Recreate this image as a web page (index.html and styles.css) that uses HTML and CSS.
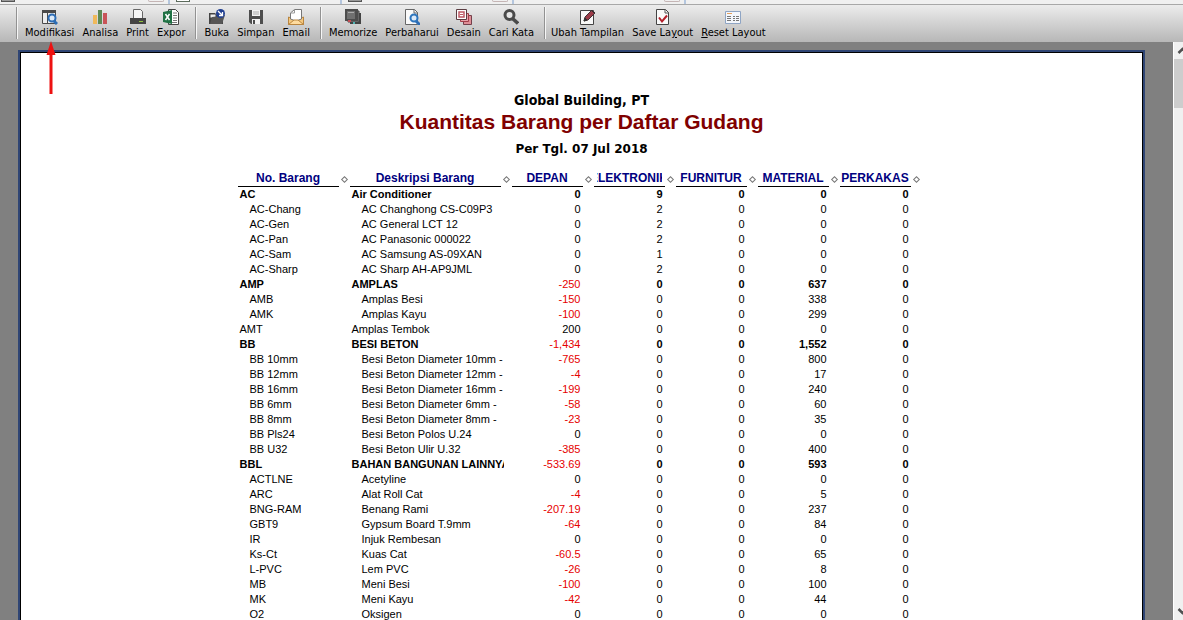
FILE: index.html
```html
<!DOCTYPE html>
<html lang="id">
<head>
<meta charset="utf-8">
<title>Kuantitas Barang per Daftar Gudang</title>
<link rel="stylesheet" href="styles.css">
</head>
<body>
<div class="app">
<div class="tabs">
<span class="tab tab-first"><i class="doc"></i><i class="close"></i></span>
<span class="tab"><i class="doc doc-green"></i></span>
<span class="tab"><i class="doc"></i><i class="close"></i></span>
<span class="tab tab-wide"><i class="close"></i></span>
<span class="tab tab-rest"></span>
</div>
<nav class="toolbar">
<div class="group">
<button class="tool"><svg viewBox="0 0 16 16"><path d="M.5 1.500h13v13H.5z" fill="#eee" stroke="#4a4a4a"/><path d="M0 1h14v3H0zM5 4h1v11H5z" fill="#4a4a4a"/><path d="M11 11l4 4" stroke="#2d6db5" stroke-width="3"/><circle cx="10" cy="9" r="3.500" fill="#dceaf8" stroke="#2d6db5" stroke-width="2"/></svg>Modifikasi</button>
<button class="tool"><svg viewBox="0 0 16 16"><path d="M1 6h4v9H1z" fill="#f0b95a"/><path d="M6 1h4v14H6z" fill="#5d8a55"/><path d="M11 4h4v11h-4z" fill="#c85458"/></svg>Analisa</button>
<button class="tool"><svg viewBox="0 0 16 16"><path d="M3.500 10V.5h7l2 2V10" fill="#f5f5f5" stroke="#666"/><path d="M0 9h16v6H0z" fill="#444"/><path d="M9 12h4v1H9z" fill="#8fc43e"/></svg>Print</button>
<button class="tool"><svg viewBox="0 0 16 16"><path d="M5.500.5h7l3 3v12h-10z" fill="#fff" stroke="#444"/><path d="M10 4h4M10 6.500h4M10 9h4M10 11.500h4M7 13.500h7" stroke="#777"/><path d="M0 3l9-2v14l-9-2z" fill="#207245"/><path d="M2.500 5l4 6M6.500 5l-4 6" stroke="#fff" stroke-width="1.500"/></svg>Expor</button>
</div>
<div class="group">
<button class="tool"><svg viewBox="0 0 16 16"><path d="M0 4h6l2 2h6v9H0z" fill="#444"/><path d="M1.500 5.500h5v3h-5z" fill="#eee"/><path d="M3 8l9-1 4-1-3 9H1z" fill="#565656"/><circle cx="11.500" cy="4.500" r="4.500" fill="#203f90"/><path d="M9 2l4 4M13.500 3v3.500H10" stroke="#fff" fill="none" stroke-width="1.300"/></svg>Buka</button>
<button class="tool"><svg viewBox="0 0 16 16"><path d="M1 1h14v14H3l-2-2z" fill="#4d4d4d"/><path d="M4 1h8v6H4zM4 10h8v5H4z" fill="#f2f2f2"/><path d="M5 11h2v4H5z" fill="#4d4d4d"/><path d="M5 3h6M5 5h6" stroke="#aaa"/></svg>Simpan</button>
<button class="tool"><svg viewBox="0 0 16 16"><path d="M.5 8v7.500h15V8L8 11z" fill="#f4c77d" stroke="#b9853f"/><path d="M2.500 10V4l4-3.500h7V10L8 12z" fill="#fff" stroke="#777"/><path d="M2.500 4h4V.5" fill="none" stroke="#999"/><path d="M.5 15.500L6 11h4l5.500 4.500z" fill="#ffdc9f" stroke="#b9853f"/></svg>Email</button>
</div>
<div class="group">
<button class="tool"><svg viewBox="0 0 16 16"><path d="M5 4h11v11H5z" fill="#444"/><path d="M3 2h11v11H3z" fill="#888" stroke="#444"/><path d="M0 0h13v12H0z" fill="#4d4d4d"/><path d="M2 2h8v8H2z" fill="#707070"/><path d="M3 3h6v1H3z" fill="#aaa"/><path d="M3 11h3v2H3z" fill="#c44d55"/><path d="M8 13h2v2H8z" fill="#53b5b5"/></svg>Memorize</button>
<button class="tool"><svg viewBox="0 0 16 16"><path d="M1.500.5h9l3 3v12h-12z" fill="#fafafa" stroke="#666"/><path d="M10 .5V4h4" fill="none" stroke="#666"/><path d="M11 11l5 5" stroke="#2d6db5" stroke-width="3"/><circle cx="10" cy="9" r="3.500" fill="#dceaf8" stroke="#2d75bd" stroke-width="2"/></svg>Perbaharui</button>
<button class="tool"><svg viewBox="0 0 16 16"><path d="M7.500 6.500h8v9h-8z" fill="#df8e96" stroke="#74404b"/><path d="M4.500 4.500h8v8h-8z" fill="#e5a3aa" stroke="#a23e4a"/><path d="M.5.5h10v10H.5z" fill="#fff" stroke="#5b3d42"/><path d="M3 3h5v5H3z" fill="#fff" stroke="#bf5965" stroke-width="1.500"/><path d="M4 5.500h3" stroke="#bf5965"/></svg>Desain</button>
<button class="tool"><svg viewBox="0 0 16 16"><path d="M9.500 9.500l5.500 5" stroke="#4a4a4a" stroke-width="3.500"/><circle cx="6.500" cy="6" r="4.500" fill="#e6e6e6" stroke="#4a4a4a" stroke-width="3"/></svg>Cari Kata</button>
</div>
<div class="group group-last">
<button class="tool"><svg viewBox="0 0 16 16"><path d="M.5 1.500h13v14H.5z" fill="#f8f8f8" stroke="#444"/><path d="M4 12l1-4 7-7 3 3-7 7z" fill="#9c3b48" stroke="#3f3034"/><path d="M11 1l3.500 3.500M4 12l3-1-2-2z" stroke="#333" fill="#333"/></svg>Ubah Tampilan</button>
<button class="tool"><svg viewBox="0 0 16 16"><path d="M1.500.5h9l3 3v12h-12z" fill="#fafafa" stroke="#444"/><path d="M10 .5V4h4" fill="none" stroke="#555"/><path d="M4 8.500l3 4 5-6" fill="none" stroke="#b3202b" stroke-width="2"/></svg><span>Save La<u>y</u>out</span></button>
<button class="tool"><svg viewBox="0 0 16 16"><path d="M.5 2.500h15v12H.5z" fill="#f4f7fc" stroke="#8fa5c4"/><path d="M2 4.500h5" stroke="#e6a25e"/><path d="M2 7.500h4M2 9.500h4M2 11.500h4M8 7.500h2M11 7.500h3M8 9.500h2M11 9.500h3M8 11.500h2M11 11.500h3" stroke="#777"/></svg><span><u>R</u>eset Layout</span></button>
</div>
</nav>
<main class="workspace">
<div class="viewer">
<article class="page">
<header class="heading">
<p class="company">Global Building, PT</p>
<h1 class="title">Kuantitas Barang per Daftar Gudang</h1>
<p class="period">Per Tgl. 07 Jul 2018</p>
</header>
<table class="report">
<colgroup><col class="c-no"><col class="c-desc"><col class="c-qty"><col class="c-qty"><col class="c-qty"><col class="c-qty"><col class="c-qty"></colgroup>
<thead><tr>
<th><div class="head"><span class="name">No. Barang</span><i class="grip"></i></div></th>
<th><div class="head"><span class="name">Deskripsi Barang</span><i class="grip"></i></div></th>
<th><div class="head"><span class="name">DEPAN</span><i class="grip"></i></div></th>
<th><div class="head"><span class="name"><span class="clip">ELEKTRONIK</span></span><i class="grip"></i></div></th>
<th><div class="head"><span class="name">FURNITUR</span><i class="grip"></i></div></th>
<th><div class="head"><span class="name">MATERIAL</span><i class="grip"></i></div></th>
<th><div class="head"><span class="name">PERKAKAS</span><i class="grip"></i></div></th>
</tr></thead>
<tbody>
<tr class="parent"><td>AC</td><td>Air Conditioner</td><td>0</td><td>9</td><td>0</td><td>0</td><td>0</td></tr>
<tr class="child"><td>AC-Chang</td><td>AC Changhong CS-C09P3</td><td>0</td><td>2</td><td>0</td><td>0</td><td>0</td></tr>
<tr class="child"><td>AC-Gen</td><td>AC General LCT 12</td><td>0</td><td>2</td><td>0</td><td>0</td><td>0</td></tr>
<tr class="child"><td>AC-Pan</td><td>AC Panasonic 000022</td><td>0</td><td>2</td><td>0</td><td>0</td><td>0</td></tr>
<tr class="child"><td>AC-Sam</td><td>AC Samsung AS-09XAN</td><td>0</td><td>1</td><td>0</td><td>0</td><td>0</td></tr>
<tr class="child"><td>AC-Sharp</td><td>AC Sharp AH-AP9JML</td><td>0</td><td>2</td><td>0</td><td>0</td><td>0</td></tr>
<tr class="parent"><td>AMP</td><td>AMPLAS</td><td class="neg">-250</td><td>0</td><td>0</td><td>637</td><td>0</td></tr>
<tr class="child"><td>AMB</td><td>Amplas Besi</td><td class="neg">-150</td><td>0</td><td>0</td><td>338</td><td>0</td></tr>
<tr class="child"><td>AMK</td><td>Amplas Kayu</td><td class="neg">-100</td><td>0</td><td>0</td><td>299</td><td>0</td></tr>
<tr><td>AMT</td><td>Amplas Tembok</td><td>200</td><td>0</td><td>0</td><td>0</td><td>0</td></tr>
<tr class="parent"><td>BB</td><td>BESI BETON</td><td class="neg">-1,434</td><td>0</td><td>0</td><td>1,552</td><td>0</td></tr>
<tr class="child"><td>BB 10mm</td><td>Besi Beton Diameter 10mm -</td><td class="neg">-765</td><td>0</td><td>0</td><td>800</td><td>0</td></tr>
<tr class="child"><td>BB 12mm</td><td>Besi Beton Diameter 12mm -</td><td class="neg">-4</td><td>0</td><td>0</td><td>17</td><td>0</td></tr>
<tr class="child"><td>BB 16mm</td><td>Besi Beton Diameter 16mm -</td><td class="neg">-199</td><td>0</td><td>0</td><td>240</td><td>0</td></tr>
<tr class="child"><td>BB 6mm</td><td>Besi Beton Diameter 6mm -</td><td class="neg">-58</td><td>0</td><td>0</td><td>60</td><td>0</td></tr>
<tr class="child"><td>BB 8mm</td><td>Besi Beton Diameter 8mm -</td><td class="neg">-23</td><td>0</td><td>0</td><td>35</td><td>0</td></tr>
<tr class="child"><td>BB Pls24</td><td>Besi Beton Polos U.24</td><td>0</td><td>0</td><td>0</td><td>0</td><td>0</td></tr>
<tr class="child"><td>BB U32</td><td>Besi Beton Ulir U.32</td><td class="neg">-385</td><td>0</td><td>0</td><td>400</td><td>0</td></tr>
<tr class="parent"><td>BBL</td><td>BAHAN BANGUNAN LAINNYA</td><td class="neg">-533.69</td><td>0</td><td>0</td><td>593</td><td>0</td></tr>
<tr class="child"><td>ACTLNE</td><td>Acetyline</td><td>0</td><td>0</td><td>0</td><td>0</td><td>0</td></tr>
<tr class="child"><td>ARC</td><td>Alat Roll Cat</td><td class="neg">-4</td><td>0</td><td>0</td><td>5</td><td>0</td></tr>
<tr class="child"><td>BNG-RAM</td><td>Benang Rami</td><td class="neg">-207.19</td><td>0</td><td>0</td><td>237</td><td>0</td></tr>
<tr class="child"><td>GBT9</td><td>Gypsum Board T.9mm</td><td class="neg">-64</td><td>0</td><td>0</td><td>84</td><td>0</td></tr>
<tr class="child"><td>IR</td><td>Injuk Rembesan</td><td>0</td><td>0</td><td>0</td><td>0</td><td>0</td></tr>
<tr class="child"><td>Ks-Ct</td><td>Kuas Cat</td><td class="neg">-60.5</td><td>0</td><td>0</td><td>65</td><td>0</td></tr>
<tr class="child"><td>L-PVC</td><td>Lem PVC</td><td class="neg">-26</td><td>0</td><td>0</td><td>8</td><td>0</td></tr>
<tr class="child"><td>MB</td><td>Meni Besi</td><td class="neg">-100</td><td>0</td><td>0</td><td>100</td><td>0</td></tr>
<tr class="child"><td>MK</td><td>Meni Kayu</td><td class="neg">-42</td><td>0</td><td>0</td><td>44</td><td>0</td></tr>
<tr class="child"><td>O2</td><td>Oksigen</td><td>0</td><td>0</td><td>0</td><td>0</td><td>0</td></tr>
</tbody>
</table>
</article>
</div>
<div class="scrollbar"><svg class="arrow" viewBox="0 0 17 17"><path d="M4.500 11l4-4 4 4" fill="none" stroke="#505050" stroke-width="2.500"/></svg><div class="thumb"></div><svg class="arrow arrow-end" viewBox="0 0 17 17"><path d="M4.500 6l4 4 4-4" fill="none" stroke="#505050" stroke-width="2.500"/></svg></div>
</main>
<svg class="pointer" viewBox="0 0 10 54"><path d="M5 0l4.500 14h-3v39h-3V14h-3z" fill="#ed1111"/></svg>
</div>
</body>
</html>
```
FILE: styles.css
```css
* { box-sizing: border-box; }
body { margin: 0; font-family: "Liberation Sans", Arial, sans-serif; }
p, h1 { margin: 0; }
.app { position: relative; display: flex; flex-direction: column; height: 100vh; overflow: hidden; background: #808080; }
.tabs { flex: none; display: flex; height: 5px; background: #f0f0f0; border-bottom: 1px solid #a8a8a8; overflow: hidden; }
.tab { flex: none; display: flex; justify-content: space-between; width: 172px; padding: 0 4px 0 6px; border-right: 2px solid #b4c6de; }
.tab-first { width: 170px; padding-left: 1px; }
.tab-wide { justify-content: flex-end; }
.tab-rest { flex: 1; border: 0; }
.doc { width: 14px; height: 2px; background: #999; border: 1px solid #555; border-top: 0; }
.doc-green { border-color: #5c6b5c; background: #fff; }
.close { width: 16px; height: 2px; border: 1px solid #c5b5b5; border-top: 0; border-radius: 0 0 4px 4px; }
.toolbar { flex: none; display: flex; height: 37px; padding-left: 16px; background: linear-gradient(#ececec, #b7b7b7); }
.group { display: flex; align-items: flex-start; margin: 2px 0 3px; padding: 0 6px 0 4px; border-left: 1px solid #929292; box-shadow: inset 1px 0 #f6f6f6; }
.group-last { padding-left: 2px; }
.tool { display: flex; flex-direction: column; align-items: center; gap: 1px; padding: 2px 4px 0; border: 0; background: none; color: #000; font: 11px/14px "DejaVu Sans Condensed", Tahoma, sans-serif; white-space: nowrap; }
.tool svg { width: 16px; height: 16px; }
.workspace { flex: 1; min-height: 0; display: flex; }
.viewer { flex: 1; min-width: 0; padding: 8px 28px 0 18px; overflow: hidden; }
.page { min-height: 640px; padding: 38px 0 0; background: #fff; border: 1px solid #000; outline: 2px solid #2f4574; margin: 2px; }
.heading { text-align: center; }
.company { font: bold 14px/18px "DejaVu Sans Condensed", Tahoma, sans-serif; }
.title { color: #800000; font-size: 21px; line-height: 26px; }
.period { margin-top: 5px; font: bold 12px/18px "DejaVu Sans", Verdana, sans-serif; }
.report { width: 688px; margin: 13px auto 0; border: 0 solid transparent; border-right-width: 4px; table-layout: fixed; border-collapse: separate; border-spacing: 0; font-size: 11px; }
.c-no { width: 112px; }
.c-desc { width: 162px; }
.c-qty { width: 82px; }
.report th { padding: 0; color: #000080; font-size: 12px; line-height: 15px; }
.head { display: flex; align-items: center; }
.name { flex: 1; display: flex; justify-content: center; min-width: 0; white-space: nowrap; border-bottom: 1px solid #000; }
.clip { display: flex; justify-content: center; width: 65px; overflow: hidden; }
.grip { flex: none; width: 5px; height: 5px; margin: 0 3px; border: 1px solid #777; transform: rotate(45deg); }
.report td { height: 15px; padding: 0 0 0 2px; border-right: 13px solid transparent; line-height: 15px; text-align: right; white-space: nowrap; overflow: hidden; }
.report td:nth-child(-n+2) { border-right-width: 8px; text-align: left; }
.child td:nth-child(-n+2) { padding-left: 12px; }
.parent td { font-weight: bold; }
.report .neg { color: #e60000; font-weight: normal; }
.scrollbar { flex: none; display: flex; flex-direction: column; width: 17px; margin-right: -7px; background: #f0f0f0; border-left: 1px solid #fff; }
.arrow { width: 17px; height: 17px; }
.arrow-end { margin-top: auto; }
.thumb { height: 49px; background: #cdcdcd; }
.pointer { position: absolute; left: 46px; top: 41px; width: 10px; height: 54px; }
```
